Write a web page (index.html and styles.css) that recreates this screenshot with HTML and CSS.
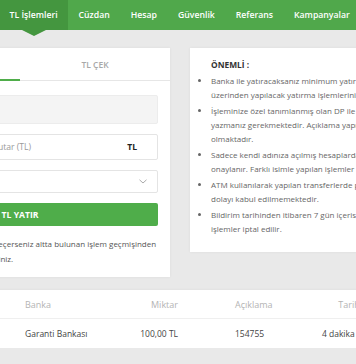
FILE: index.html
```html
<!DOCTYPE html>
<html>
<head>
  <meta charset="UTF-8">
  <title>TL İşlemleri</title>
  <link rel="stylesheet" href="styles.css">
</head>
<body>
  <!-- Top Navigation -->
  <nav class="topnav">
    <a class="nav-item active" href="#">TL İşlemleri</a>
    <a class="nav-item" href="#">Cüzdan</a>
    <a class="nav-item" href="#">Hesap</a>
    <a class="nav-item" href="#">Güvenlik</a>
    <a class="nav-item" href="#">Referans</a>
    <a class="nav-item" href="#">Kampanyalar</a>
  </nav>

  <main class="page">
    <div class="cards">
      <!-- Deposit / Withdraw -->
      <section class="card transfer-card">
        <div class="tabs">
          <span class="tab active">TL YATIR</span>
          <span class="tab">TL ÇEK</span>
        </div>
        <form class="transfer-form">
          <div class="field field-readonly">DP-154755</div>
          <div class="field field-amount">
            <span class="placeholder">Yatırmak İstediğiniz Tutar (TL)</span>
            <b class="unit">TL</b>
          </div>
          <div class="field field-select">
            <span class="placeholder">Banka Seçiniz</span>
            <svg class="chevron" width="8" height="5" viewBox="0 0 8 5"><path d="M0.5 0.8 L4 4 L7.5 0.8" fill="none" stroke="#a0a0a0" stroke-width="0.9"/></svg>
          </div>
          <button type="button" class="btn-deposit">TL YATIR</button>
          <p class="hint">Talebinin sonucu için, aşağıya geçerseniz altta bulunan işlem geçmişinden<br>işlem durumunu takip edebilirsiniz.</p>
        </form>
      </section>

      <!-- Important notes -->
      <section class="card info-card">
        <h3 class="info-title">ÖNEMLİ :</h3>
        <ul class="info-list">
          <li>Banka ile yatıracaksanız minimum yatırım 20 TL'dir. FAST ve EFT<br>üzerinden yapılacak yatırma işlemlerinizde ücret alınmaz.</li>
          <li>İşleminize özel tanımlanmış olan DP ile başlayan kodu açıklamaya<br>yazmanız gerekmektedir. Açıklama yapılmayan işlemlerde gecikme<br>olmaktadır.</li>
          <li>Sadece kendi adınıza açılmış hesaplardan yapılan transferler<br>onaylanır. Farklı isimle yapılan işlemler iade edilir.</li>
          <li>ATM kullanılarak yapılan transferlerde para kaynağı belirsiz olduğundan<br>dolayı kabul edilmemektedir.</li>
          <li>Bildirim tarihinden itibaren 7 gün içerisinde onaylanmayan<br>işlemler iptal edilir.</li>
        </ul>
      </section>
    </div>

    <!-- History -->
    <section class="card history-card">
      <div class="history-row history-head">
        <span class="col-status">Durum</span>
        <span>Banka</span>
        <span class="col-amount">Miktar</span>
        <span class="col-desc">Açıklama</span>
        <span class="col-date">Tarih</span>
      </div>
      <div class="history-row">
        <span class="col-status">Beklemede</span>
        <span>Garanti Bankası</span>
        <span class="col-amount">100,00 TL</span>
        <span class="col-desc">154755</span>
        <span class="col-date">4 dakika önce</span>
      </div>
    </section>
  </main>
</body>
</html>
```

FILE: styles.css
```css
/* Global */
body {
  margin: 0;
  font-family: 'Open Sans', 'Liberation Sans', sans-serif;
  background: #e9e9e9;
  overflow: hidden;
  color: #444;
}
/* Top Navigation */
.topnav {
  display: flex;
  height: 30px;
  background: #50a84b;
  margin-left: -1px;
}
.nav-item {
  position: relative;
  display: flex;
  align-items: center;
  padding: 0 10.5px;
  color: #fff;
  font-size: 8.7px;
  font-weight: 600;
  text-decoration: none;
  white-space: nowrap;
}
.nav-item.active {
  background: #44963f;
}
/* small pointer under the active tab */
.nav-item.active::after {
  content: "";
  position: absolute;
  left: 50%;
  bottom: -6px;
  margin-left: -12px;
  border-left: 12px solid transparent;
  border-right: 12px solid transparent;
  border-top: 6px solid #44963f;
}
/* Page */
.page {
  width: 660px;
  margin-left: -130px;
  padding-top: 18px;
}
.cards {
  display: flex;
  align-items: flex-start;
  gap: 20px;
  margin-bottom: 13px;
}
.card {
  background: #fff;
  box-shadow: 0 0 3px rgba(0, 0, 0, 0.06);
  box-sizing: border-box;
}
/* Transfer card */
.transfer-card {
  flex: 0 0 300px;
}
.tabs {
  display: flex;
  border-bottom: 1px solid #e6e6e6;
}
.tab {
  flex: 1;
  height: 32px;
  line-height: 33px;
  text-align: center;
  font-size: 8.5px;
  font-weight: 600;
  color: #a8a8a8;
}
.tab.active {
  color: #4fad4a;
  border-bottom: 2px solid #4fad4a;
  margin-bottom: -1px;
  height: 31px;
}
.transfer-form {
  display: flex;
  flex-direction: column;
  gap: 10px;
  padding: 14px 12px 11px;
}
.field {
  display: flex;
  align-items: center;
  justify-content: space-between;
  height: 26px;
  box-sizing: border-box;
  padding: 0 20px 0 10px;
  border: 1px solid #e4e4e4;
  border-radius: 2px;
  font-size: 8.6px;
  color: #333;
}
.field-readonly {
  height: 29px;
  background: #f4f4f4;
  border-color: #ececec;
  color: #f4f4f4;
}
.field-amount {
  padding-left: 30px;
}
.field .placeholder {
  color: #9a9a9a;
}
.field .unit {
  font-weight: 700;
  color: #222;
}
.field-select {
  height: 23px;
  padding-right: 10px;
}
.btn-deposit {
  height: 23px;
  border: none;
  border-radius: 2px;
  background: #4fad4a;
  color: #fff;
  font-family: inherit;
  font-size: 8.6px;
  font-weight: 700;
  padding: 0;
}
.hint {
  margin: 0;
  font-size: 8px;
  line-height: 15px;
  color: #555;
  white-space: nowrap;
}
/* Info card */
.info-card {
  flex: 0 0 340px;
  padding: 10px 0 14px 21px;
  overflow: hidden;
}
.info-title {
  margin: 0 0 2px;
  font-size: 8.4px;
  line-height: 14px;
  font-weight: 700;
  color: #333;
}
.info-list {
  margin: 0;
  padding: 0;
  font-size: 8px;
  line-height: 14px;
  color: #666;
  white-space: nowrap;
}
.info-list li {
  margin-bottom: 2px;
}
/* History table */
.history-row {
  display: grid;
  grid-template-columns: 155px 100px 53px 137px 68px;
  align-items: center;
  height: 29px;
  font-size: 8.5px;
  color: #444;
}
.history-head {
  height: 28px;
  border-bottom: 1px solid #efefef;
  font-size: 9px;
  color: #b4b4b4;
}
.col-status {
  padding-left: 12px;
}
.col-amount {
  text-align: right;
}
.col-desc {
  padding-left: 57px;
}
.col-date {
  text-align: center;
  white-space: nowrap;
}
```
